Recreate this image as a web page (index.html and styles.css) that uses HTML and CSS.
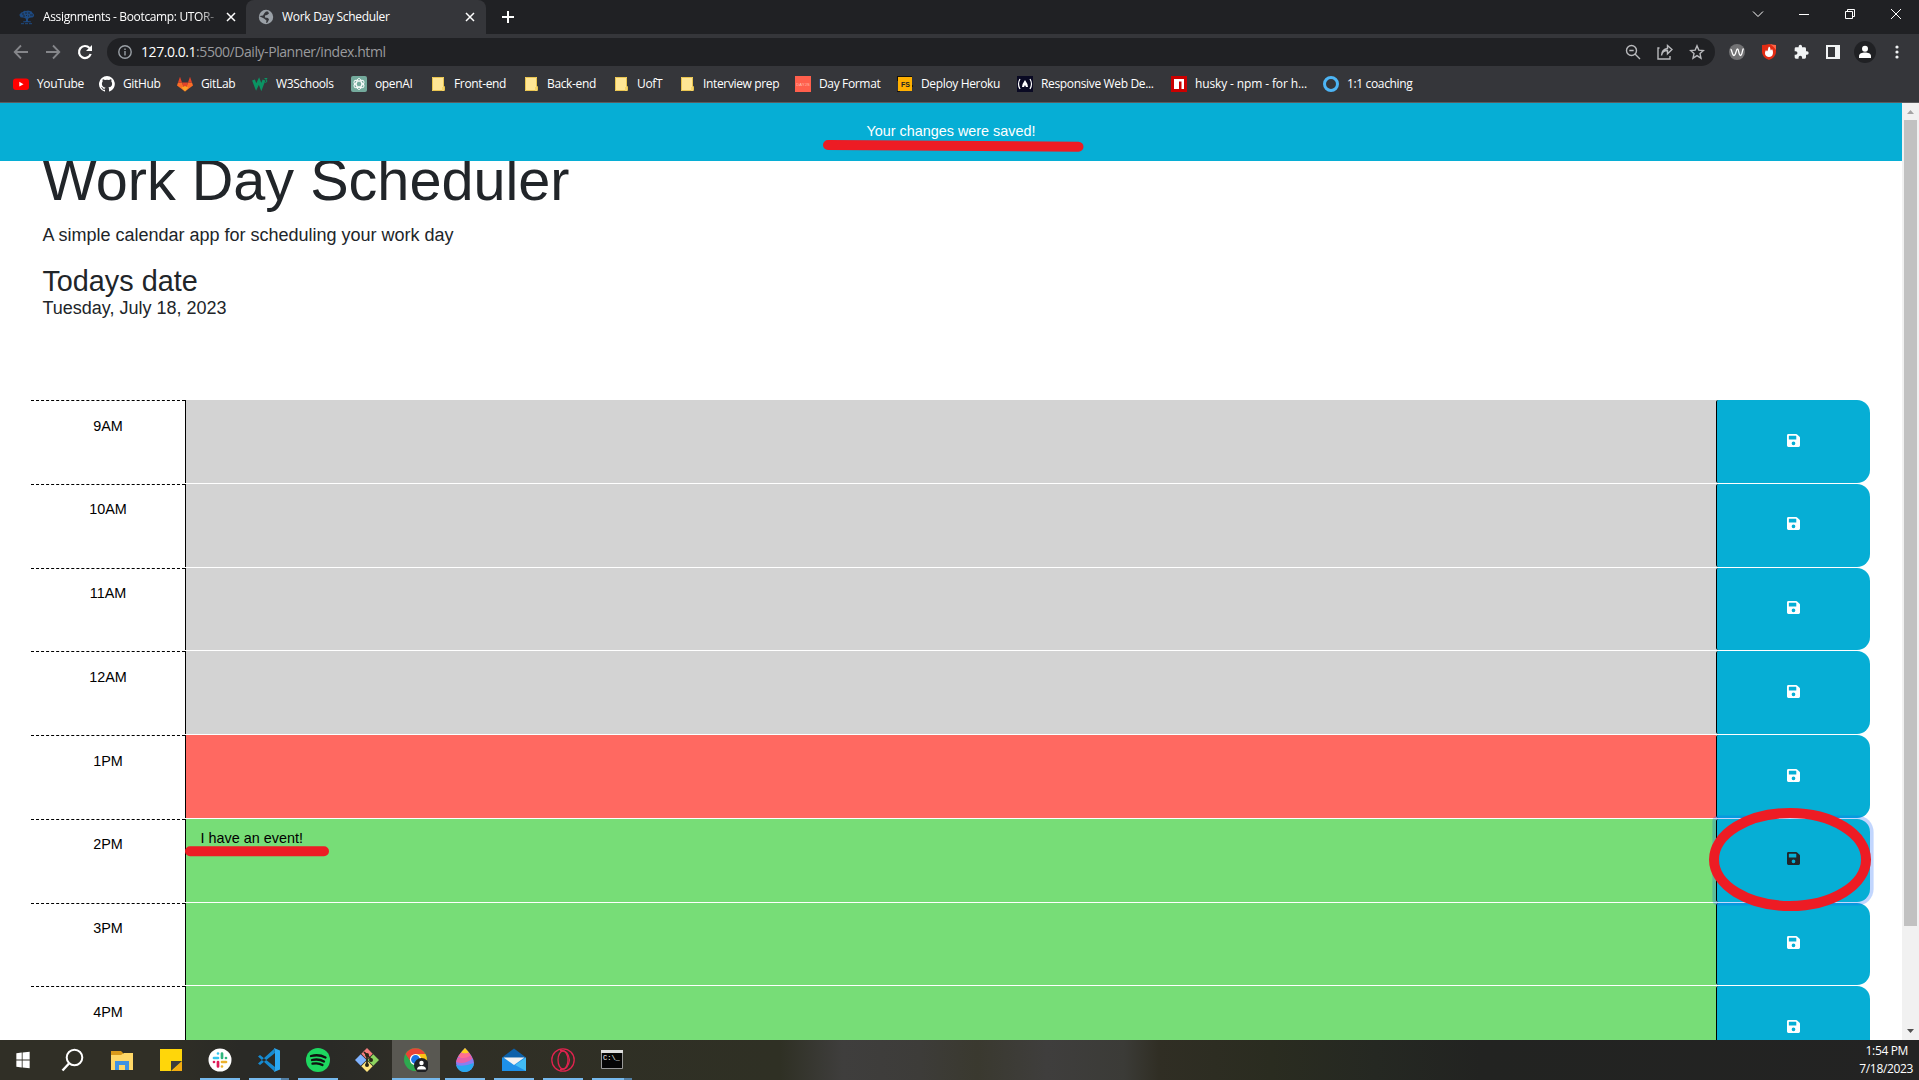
FILE: index.html
```html
<!DOCTYPE html>
<html lang="en">
<head>
<meta charset="utf-8">
<title>Work Day Scheduler</title>
<link rel="stylesheet" href="styles.css">
</head>
<body>
<svg class="defs" width="0" height="0">
  <symbol id="save" viewBox="0 0 448 448"><path fill="currentColor" fill-rule="evenodd" d="M434 98 350 14A48 48 0 0 0 316 0H48A48 48 0 0 0 0 48v352a48 48 0 0 0 48 48h352a48 48 0 0 0 48-48V132a48 48 0 0 0-14-34zM224 384a64 64 0 1 1 0-128 64 64 0 0 1 0 128zm96-308v104a12 12 0 0 1-12 12H76a12 12 0 0 1-12-12V76a12 12 0 0 1 12-12h232a12 12 0 0 1 12 12z"/></symbol>
  <symbol id="folder" viewBox="0 0 16 16"><path fill="#ffe695" d="M2 1h12v14H2z"/><path fill="none" stroke="#e9c44f" d="M2.500 1.500h11v9h1v4h-12z"/><path fill="#f6d56b" d="M12 11h2v4h-2z"/></symbol>
  <symbol id="x" viewBox="0 0 10 10"><path fill="none" stroke="currentColor" stroke-width="1.500" d="m1 1 8 8M9 1 1 9"/></symbol>
</svg>

<header class="browser">
  <div class="tabs">
    <div class="tab">
      <svg class="fav" viewBox="0 0 16 16"><path fill="#1d4a82" d="M1 5q1-2 3-2 1-2 3-1 2-1 4 0 2 0 2.500 2 2 1 1.500 3-1 2-3 1.500L10 9 9 10v2l3 .5v.8H4v-.8l3-.5v-2L6 9 4 8.500Q1 9 1 7-.2 6 1 5z"/><path fill="none" stroke="#202124" stroke-width=".8" d="M3 5h2m2-2v2m2-1h2m0 2h3M4 7h2m3 0h1M7 6.500h1"/><path stroke="#1d4a82" d="M2 14.700h3m1 0h3m1 0h3"/></svg>
      <span class="tab-title faded">Assignments - Bootcamp: UTOR-</span>
      <svg class="close"><use href="#x"/></svg>
    </div>
    <div class="tab active">
      <svg class="fav" viewBox="0 0 16 16"><circle cx="8" cy="8" r="7.200" fill="#9aa0a6"/><path fill="#35363a" d="M8 2.500h2l1 2-2 1.500-2 .5v2l3 .5 1 1.500-1.500 3L8 14l.5-2.500L6 9.500 2 7.500v1L1.800 7 5 6.500 6.500 4z"/></svg>
      <span class="tab-title">Work Day Scheduler</span>
      <svg class="close"><use href="#x"/></svg>
    </div>
    <svg class="plus" viewBox="0 0 12 12"><path stroke="#fff" stroke-width="2" d="M6 0v12M0 6h12"/></svg>
    <div class="window-controls">
      <svg viewBox="0 0 12 12"><path d="m1 3.500 5 5 5-5"/></svg>
      <svg viewBox="0 0 12 12"><path d="M1 6.500h10"/></svg>
      <svg viewBox="0 0 12 12"><path d="M1.500 3.500h7v7h-7zM3.500 3V1.500h7v7H9"/></svg>
      <svg viewBox="0 0 12 12"><path d="m1 1 10 10M11 1 1 11"/></svg>
    </div>
  </div>

  <div class="toolbar">
    <div class="nav">
      <svg viewBox="0 0 16 16"><path d="M15 8H2M8 1.500 1.700 8 8 14.500"/></svg>
      <svg viewBox="0 0 16 16"><path d="M1 8h13M8 1.500 14.300 8 8 14.500"/></svg>
      <svg class="reload" viewBox="0 0 16 16"><path d="M13.700 10A6 6 0 1 1 12.500 4"/><path class="tip" d="M15 1v6H9z"/></svg>
    </div>
    <div class="omnibox">
      <svg class="info" viewBox="0 0 14 14"><circle cx="7" cy="7" r="6.200"/><path d="M7 6v4.500M7 3.500v1.400"/></svg>
      <span class="url"><b>127.0.0.1</b>:5500/Daily-Planner/index.html</span>
      <div class="omni-actions">
        <svg viewBox="0 0 16 16"><circle cx="6.500" cy="6.500" r="5"/><path d="m10 10 5 5M4.300 6.500h4.400"/></svg>
        <svg viewBox="0 0 16 16"><path d="M2.500 4H1v11h12v-3M4.500 11.500C5 8 7 6.500 10.500 6.500v3.300L15 5.500l-4.500-4V4.500C6.500 5 4.800 7.500 4.500 11.500z"/></svg>
        <svg viewBox="0 0 16 16"><path d="m8 1.800 1.800 4.300 4.700.4L11 9.600l1 4.600-4-2.500-4 2.500 1-4.600-3.500-3.100 4.700-.4z"/></svg>
      </div>
    </div>
    <div class="extensions">
      <svg viewBox="0 0 16 16"><circle cx="8" cy="8" r="8" fill="#727274"/><path fill="none" stroke="#fff" stroke-width="1.300" d="M1.500 5.500C3 5 3 11.500 5 11.500S7 5 8.500 5s1 6.500 3 6.500S13 6 14.500 4.500"/></svg>
      <svg viewBox="0 0 16 16"><path fill="#e22c14" d="M1 1q4 0 7-1 3 1 7 1v7q0 5-7 8Q1 13 1 8z"/><path fill="#ff6547" d="M9 0q3 1 6 1v5q-3-4-6-6z"/><path fill="#fff" d="M8 2.500c2 1.500 1 3 2 4l1-1.500c2 3.500 1 8-3 8s-5-4-3-7l1 1.500C7.500 6 6.500 4.500 8 2.500z"/></svg>
      <svg viewBox="0 0 24 24"><path fill="#f1f3f4" d="M21 11h-1.500V7a2 2 0 0 0-2-2h-4V3.500a2.500 2.500 0 0 0-5 0V5h-4a2 2 0 0 0-2 2v3.800H4a2.700 2.700 0 0 1 0 5.400H2.500V20a2 2 0 0 0 2 2h3.800v-1.500a2.700 2.700 0 0 1 5.400 0V22h3.800a2 2 0 0 0 2-2v-4H21a2.500 2.500 0 0 0 0-5z"/></svg>
      <svg viewBox="0 0 16 16"><path fill="#f1f3f4" fill-rule="evenodd" d="M1 1h14v14H1zm2 2v10h7V3z"/></svg>
      <span class="avatar"><svg viewBox="0 0 16 16"><circle cx="8" cy="4.800" r="3" fill="#fff"/><path fill="#fff" d="M2 14v-2c0-2.500 3-3.500 6-3.500s6 1 6 3.500v2z"/></svg></span>
      <svg viewBox="0 0 16 16"><g fill="#f1f3f4"><circle cx="8" cy="3" r="1.600"/><circle cx="8" cy="8" r="1.600"/><circle cx="8" cy="13" r="1.600"/></g></svg>
    </div>
  </div>

  <nav class="bookmarks">
    <a><svg viewBox="0 0 16 16"><rect y="2.500" width="16" height="11.500" rx="3" fill="#f00"/><path fill="#fff" d="m6.300 5.800 4.200 2.400-4.200 2.400z"/></svg><span>YouTube</span></a>
    <a><svg viewBox="0 0 16 16"><path fill="#fff" d="M8 0a8 8 0 0 0-2.500 15.600c.4.100.5-.2.500-.4v-1.500c-2.200.5-2.700-1-2.700-1-.4-.9-.9-1.100-.9-1.100-.7-.5.100-.5.100-.5.800.1 1.200.8 1.200.8.700 1.200 1.900.9 2.300.7.100-.5.300-.9.500-1.100-1.800-.2-3.600-.9-3.600-4 0-.9.300-1.600.8-2.100-.1-.2-.4-1 .1-2.100 0 0 .7-.2 2.200.8a7.500 7.500 0 0 1 4 0c1.500-1 2.200-.8 2.200-.8.400 1.100.2 1.900.1 2.100.5.600.8 1.300.8 2.100 0 3.100-1.900 3.700-3.700 3.900.3.300.6.800.6 1.500v2.200c0 .2.100.5.600.4A8 8 0 0 0 8 0z"/></svg><span>GitHub</span></a>
    <a><svg viewBox="0 0 16 16"><path fill="#e24329" d="m8 15.500 3-9H5z"/><path fill="#fc6d26" d="M8 15.500 0 9.500 1 6.500h4zM8 15.500l8-6-1-3h-4z"/><path fill="#e24329" d="M1 6.500 3 .8l2 5.700zM15 6.500 13 .8l-2 5.700z"/><path fill="#fca326" d="m8 15.500-3.500-4L8 10l3.500 1.500z"/></svg><span>GitLab</span></a>
    <a><svg viewBox="0 0 16 16"><path fill="none" stroke="#0b9463" stroke-width="3" d="m1.500 4 2.700 7L7 5l2.300 6L12 4"/><path fill="none" stroke="#0b9463" d="M12.500 2.500H15L13.700 4q2 .5.800 2-1 .7-2 0"/></svg><span>W3Schools</span></a>
    <a><svg viewBox="0 0 16 16"><rect width="16" height="16" rx="2" fill="#74aa9c"/><g fill="none" stroke="#fff" stroke-width=".9"><ellipse cx="8" cy="8" rx="2.700" ry="5.500"/><ellipse cx="8" cy="8" rx="2.700" ry="5.500" transform="rotate(60 8 8)"/><ellipse cx="8" cy="8" rx="2.700" ry="5.500" transform="rotate(120 8 8)"/></g></svg><span>openAI</span></a>
    <a><svg><use href="#folder"/></svg><span>Front-end</span></a>
    <a><svg><use href="#folder"/></svg><span>Back-end</span></a>
    <a><svg><use href="#folder"/></svg><span>UofT</span></a>
    <a><svg><use href="#folder"/></svg><span>Interview prep</span></a>
    <a><svg viewBox="0 0 16 16"><path fill="#ff5f4c" d="M0 0h16v16H0z"/><text x="1.200" y="9.500" class="dayjs" textLength="13.500">DAYJS</text></svg><span>Day Format</span></a>
    <a><svg viewBox="0 0 16 16"><path fill="#ffb000" d="M1 1h14v14H1z"/><path stroke="#15120a" d="M0 .5h15M.5 1v4M15.500 9v2M0 15.500h3"/><text x="4" y="10.500" class="fs">FS</text></svg><span>Deploy Heroku</span></a>
    <a><svg viewBox="0 0 16 16"><path fill="#0a0a23" d="M0 0h16v16H0z"/><path fill="none" stroke="#fff" stroke-width="1.200" d="M3 3Q0 8 3 13M13 3q3 5 0 10"/><path fill="#fff" d="M8 4q3 4 3 7H9L8 9l-1 2H5q0-3 3-7z"/></svg><span>Responsive Web De...</span></a>
    <a class="husky"><svg viewBox="0 0 16 16"><path fill="#cb0000" d="M0 0h16v16H0z"/><path fill="#fff" d="M3 3h10v10h-2.500V5.500H8V13H3z"/></svg><span>husky - npm - for h...</span></a>
    <a><svg viewBox="0 0 16 16"><circle cx="8" cy="8" r="6.500" fill="none" stroke="#4db5f5" stroke-width="3"/></svg><span>1:1 coaching</span></a>
  </nav>
</header>

<div class="viewport">
  <main class="page">
    <div class="toast">Your changes were saved!</div>
    <div class="hero">
      <h1>Work Day Scheduler</h1>
      <p class="lead">A simple calendar app for scheduling your work day</p>
      <h3>Todays date</h3>
      <p class="today">Tuesday, July 18, 2023</p>
    </div>
    <div class="schedule">
      <div class="row past"><div class="hour">9AM</div><div class="event"></div><div class="save"><svg><use href="#save"/></svg></div></div>
      <div class="row past"><div class="hour">10AM</div><div class="event"></div><div class="save"><svg><use href="#save"/></svg></div></div>
      <div class="row past"><div class="hour">11AM</div><div class="event"></div><div class="save"><svg><use href="#save"/></svg></div></div>
      <div class="row past"><div class="hour">12AM</div><div class="event"></div><div class="save"><svg><use href="#save"/></svg></div></div>
      <div class="row present"><div class="hour">1PM</div><div class="event"></div><div class="save"><svg><use href="#save"/></svg></div></div>
      <div class="row future"><div class="hour">2PM</div><div class="event">I have an event!</div><div class="save focused"><svg><use href="#save"/></svg></div></div>
      <div class="row future"><div class="hour">3PM</div><div class="event"></div><div class="save"><svg><use href="#save"/></svg></div></div>
      <div class="row future"><div class="hour">4PM</div><div class="event"></div><div class="save"><svg><use href="#save"/></svg></div></div>
    </div>
    <svg class="marks" viewBox="0 103 1902 937"><g fill="none" stroke="#ed1c24" stroke-width="10" stroke-linecap="round"><path d="m828 145 250.500 1.800M190 851.200h134"/><ellipse cx="1790" cy="859.500" rx="76" ry="46.500"/></g></svg>
  </main>
  <aside class="scrollbar">
    <svg viewBox="0 0 17 17"><path fill="#a3a3a3" d="m5 11 3.500-4 3.500 4z"/></svg>
    <div class="thumb"></div>
    <svg viewBox="0 0 17 17"><path fill="#505050" d="m5 6 3.500 4L12 6z"/></svg>
  </aside>
</div>

<footer class="taskbar">
  <div class="app"><svg viewBox="0 0 24 24"><path fill="#fff" d="m4 4 6.500-.9v8.400H4zM11.500 3 20 2v9.500h-8.500zM4 12.500h6.500v8.400L4 20zM11.500 12.500H20V22l-8.500-1z"/></svg></div>
  <div class="app"><svg viewBox="0 0 24 24"><circle cx="13.500" cy="9.500" r="7.800" fill="none" stroke="#fff" stroke-width="2"/><path stroke="#fff" stroke-width="2.400" d="M8 15.500 1.500 22.500"/></svg></div>
  <div class="app"><svg viewBox="0 0 24 24"><path fill="#d99a1b" d="M1 3h10l2 2v5H1z"/><path fill="#ffd867" d="M1 7h10l3-2h9v17H1z"/><path fill="#3f93e2" d="M5 13h14v9h-4v-5H9v5H5z"/></svg></div>
  <div class="app"><svg viewBox="0 0 24 24"><path fill="#ffd60a" d="M1 1h22v22H1z"/><path fill="#f3ac10" d="m23 13-10 10h10z"/><path fill="#3c3b3b" d="M12 13h11L12 23z"/></svg></div>
  <div class="app open"><svg viewBox="0 0 24 24"><circle cx="12" cy="12" r="11.500" fill="#fff"/><g fill="none" stroke-width="2.700" stroke-linecap="round"><path stroke="#36c5f0" d="M6 10h4M10 5.500v0"/><path stroke="#2eb67d" d="M14 5.500V10M18 10v0"/><path stroke="#ecb22e" d="M14 14h4M14 18.500v0"/><path stroke="#e01e5a" d="M10 14v4.500M6 14v0"/></g></svg></div>
  <div class="app open multi"><svg viewBox="0 0 24 24"><path fill="#168bd2" d="M1 8.500 3 7l15 12-1 4zM1 15.500 3 17 18 5l-1-4z"/><path fill="#2aa8f2" d="m17 0 6 2.500v19L17 24l1-5V5z"/></svg></div>
  <div class="app open"><svg viewBox="0 0 24 24"><circle cx="12" cy="12" r="12" fill="#1ed760"/><path fill="none" stroke="#101010" stroke-width="2.300" stroke-linecap="round" d="M5 8q8-2 14.500 1.500M6 12q7-1.500 12 1.500M6.500 15.700q6-1.200 10 1.300"/></svg></div>
  <div class="app"><svg viewBox="0 0 24 24"><path fill="#f47c7c" d="m12 0 5.700 5.700L12 11.500 6.300 5.700z"/><path fill="#80b3ff" d="m5.700 6.300L11.500 12l-5.800 5.700L0 12z"/><path fill="#8dd35f" d="m18.300 6.300L24 12l-5.700 5.700-5.800-5.700z"/><path fill="#ffe680" d="m12 12.500 5.700 5.800L12 24l-5.700-5.700z"/><path stroke="#272516" stroke-width="1.700" d="M12 6v12M9 4l7 7"/><g fill="#272516"><circle cx="12" cy="7" r="2"/><circle cx="16" cy="12" r="2"/><circle cx="12" cy="17" r="2"/></g></svg></div>
  <div class="app open current"><svg viewBox="0 0 24 24"><circle cx="11.500" cy="11.500" r="11.500" fill="#2da94f"/><path fill="#ea4335" d="M1.500 6a11.500 11.500 0 0 1 20 0h-10L7 14z"/><path fill="#fbc116" d="M11.500 6h10a11.500 11.500 0 0 1-10 17l5-8z"/><circle cx="11.500" cy="11.500" r="5.600" fill="#fff"/><circle cx="11.500" cy="11.500" r="4.400" fill="#1a73e8"/><circle cx="17.500" cy="17.500" r="7.500" fill="#202124"/><circle cx="17.500" cy="15" r="2.200" fill="#fff"/><path fill="#fff" d="M13 21.500q0-3.500 4.500-3.500t4.500 3.500z"/></svg></div>
  <div class="app open"><svg viewBox="0 0 24 24"><path fill="#8b7cf0" d="M12 0q9 9 9 15a9 9 0 0 1-18 0Q3 9 12 0z"/><path fill="#ffd21c" d="M12 0 8 4.500q4 2.500 8 0z"/><path fill="#ff6f91" d="M8 4.500q4 2 8 0l2.500 4q-6 5-13.500 0z"/><path fill="#e661a8" d="M4.500 9.500q8 2 13-2l2 3Q12 17 3.200 14z"/><path fill="#28a7ef" d="M3 17q8 2 17.800-2A9 9 0 0 1 3 17z"/></svg></div>
  <div class="app open"><svg viewBox="0 0 24 24"><path fill="#0c61aa" d="m0 9.500L12 .5l12 9z"/><path fill="#1e90e8" d="M0 9.500h24V23H0z"/><path fill="#42bcf5" d="M24 9.500V23l-11-6z"/><path fill="#f2f2f2" d="M1.500 9.500h21L12 17z"/></svg></div>
  <div class="app open"><svg viewBox="0 0 24 24"><g fill="none" stroke="#e0234e" stroke-width="1.300"><circle cx="12" cy="12" r="11.200"/><ellipse cx="12" cy="12" rx="5" ry="9"/><path d="M9 2.500Q17 1.500 18.500 12 17 22.500 9 21.500"/></g></svg></div>
  <div class="app open multi"><svg viewBox="0 0 24 24"><path fill="#050505" stroke="#999" d="M1.500 3.500h21v17h-21z"/><path fill="#ddd" d="M1 2h22v3H1z"/><text x="3" y="12" class="cmd">C:\_</text></svg></div>
  <div class="clock"><span>1:54 PM</span><span>7/18/2023</span></div>
</footer>
</body>
</html>
```
FILE: styles.css
```css
* { box-sizing: border-box; }
body {
  margin: 0;
  width: 1919px;
  height: 1080px;
  overflow: hidden;
  display: flex;
  flex-direction: column;
  background: #fff;
  font-family: "Liberation Sans", Arial, sans-serif;
}
svg { display: block; flex: none; }
.defs { position: absolute; }

/* Browser chrome */
.browser {
  height: 103px;
  flex: none;
  background: #35363a;
  border-bottom: 1px solid #5b5c5f;
  color: #fff;
  font: 12px/16px "Open Sans", "Noto Sans", sans-serif;
}
.tabs { display: flex; height: 34px; align-items: stretch; background: #202124; }
.tab { display: flex; align-items: center; width: 246px; padding: 0 10px 0 19px; }
.tab.active { width: 240px; padding: 0 11px 0 12px; border-radius: 8px 8px 0 0; background: #35363a; }
.fav { width: 16px; height: 16px; margin-right: 8px; }
.tab-title { flex: 1; white-space: nowrap; letter-spacing: -.3px; }
.faded { letter-spacing: -.35px; -webkit-mask-image: linear-gradient(90deg, #000 87%, transparent); mask-image: linear-gradient(90deg, #000 87%, transparent); margin-right: 4px; }
.close { width: 10px; height: 10px; }
.plus { width: 12px; height: 12px; margin: 11px 0 0 16px; }
.window-controls { display: flex; gap: 34px; margin-left: auto; padding: 8px 17px 0 0; }
.window-controls svg { width: 12px; height: 12px; fill: none; stroke: #fff; }

.toolbar { display: flex; height: 36px; align-items: center; }
.nav { display: flex; width: 107px; gap: 16px; padding-left: 13px; }
.nav svg { width: 16px; height: 16px; fill: none; stroke: #85868a; stroke-width: 1.8; }
.nav .reload { stroke: #fff; stroke-width: 2.2; }
.nav .tip { fill: #fff; stroke: none; }
.omnibox { display: flex; align-items: center; width: 1608px; height: 28px; padding: 0 10px 0 11px; border-radius: 14px; background: #202124; }
.info { width: 14px; height: 14px; fill: none; stroke: #9aa0a6; stroke-width: 1.4; }
.url { margin-left: 9px; font-size: 14px; line-height: 20px; letter-spacing: -.44px; color: #9a9b9e; white-space: nowrap; }
.url b { font-weight: 400; color: #fff; }
.omni-actions { display: flex; gap: 16px; margin-left: auto; }
.omni-actions svg { width: 16px; height: 16px; fill: none; stroke: #b9babd; stroke-width: 1.4; }
.extensions { display: flex; align-items: center; gap: 16px; padding-left: 14px; }
.extensions svg { width: 16px; height: 16px; }
.avatar { display: grid; place-items: center; width: 22px; height: 22px; margin: 0 -3px; border-radius: 50%; background: #202124; }

.bookmarks {
  display: grid;
  grid-template-columns: 86px 78px 75px 99px 79px 93px 90px 66px 116px 102px 120px 154px 152px auto;
  height: 28px;
  padding-left: 13px;
  align-items: center;
}
.bookmarks a { display: flex; gap: 8px; align-items: center; white-space: nowrap; letter-spacing: -.35px; }
.bookmarks .husky { letter-spacing: -.13px; }
.bookmarks svg { width: 16px; height: 16px; }
.dayjs { font: 4px "Liberation Sans", sans-serif; fill: #ffc0b4; letter-spacing: 0; }
.fs { font: bold 7px "Liberation Sans", sans-serif; fill: #222; letter-spacing: 0; }

/* Page */
.viewport { display: flex; height: 937px; flex: none; }
.page { position: relative; width: 1902px; overflow: hidden; color: #212529; }
.toast {
  position: absolute;
  inset: 0 0 auto;
  z-index: 2;
  height: 58px;
  font-size: 14.4px;
  line-height: 56px;
  text-align: center;
  color: #fff;
  background: #06aed5;
}
.hero { height: 297px; padding: 43px 42.4px 0; }
h1, h3, p { margin: 0; font-weight: 400; }
h1 { font-size: 57.6px; line-height: 69px; }
.lead { margin-top: 7px; font-size: 18px; line-height: 27px; }
h3 { margin-top: 15px; font-size: 28.8px; line-height: 34px; }
.today { font-size: 18px; line-height: 20px; }
.schedule { padding: 0 32px 0 31px; }
.row { display: grid; grid-template-columns: 154px 1fr 154px; height: 83.75px; font-size: 14.4px; color: #000; }
.hour { padding-top: 14.5px; border-top: 1px dashed #000; text-align: center; line-height: 20px; }
.event { margin-bottom: 1px; padding: 8px 14.5px; border-left: 1px solid #000; line-height: 22px; }
.past .event { background: #d3d3d3; }
.present .event { background: #ff6961; }
.future .event { background: #77dd77; }
.save { display: flex; justify-content: center; margin-bottom: 1px; padding: 33.6px 1px 0 0; border-left: 1px solid #000; border-radius: 2px 13px 13px 2px; background: #06aed5; color: #fff; }
.save svg { width: 13px; height: 13px; }
.focused { z-index: 1; color: #212529; box-shadow: 0 0 0 3.6px rgba(13, 90, 253, .25); }
.marks { position: absolute; inset: 0; z-index: 3; width: 1902px; height: 937px; }
.scrollbar { display: flex; flex-direction: column; width: 17px; background: #f1f1f1; }
.scrollbar svg { width: 17px; height: 17px; }
.thumb { height: 806px; margin: 0 2px auto; background: #c1c1c1; }

/* Taskbar */
.taskbar {
  display: flex;
  height: 40px;
  flex: none;
  background: linear-gradient(90deg, #302f26 0, #302f26 160px, #2a2a26 240px, #2a2a26 330px, #302f26 440px, #2f3024 780px, #3f3e3d 843px, #3d3c39 920px, #3a392f 977px, #3f3e3d 1047px, #3b3b37 1124px, #302e24 1159px, #2a2c20 1271px, #252822 1376px, #222321 1482px, #232323 1919px);
}
.app { display: grid; place-items: center; width: 49px; padding: 0 2px 2px 0; }
.app svg { width: 24px; height: 24px; margin-top: 2px; }
.app:first-child svg { width: 24px; height: 20px; margin-left: -1px; }
.app.open { background: linear-gradient(#76b9ed, #76b9ed) 4px 100%/40px 2px no-repeat; }
.app.multi { background: linear-gradient(90deg, #76b9ed 32px, #527fa4 32px) 4px 100%/40px 2px no-repeat; }
.app.current { background: linear-gradient(#76b9ed, #76b9ed) 0 100%/48px 2px no-repeat, linear-gradient(#595852, #595852) 0 0/48px 100% no-repeat; }
.cmd { font: 7px "Liberation Mono", monospace; fill: #fff; }
.clock { display: flex; flex-direction: column; justify-content: center; align-items: flex-end; margin-left: auto; padding: 0 6px 0 0; color: #fff; font: 12px/18px "Open Sans", "Noto Sans", sans-serif; letter-spacing: -.35px; }
.clock span:first-child { padding-right: 5px; }
```
